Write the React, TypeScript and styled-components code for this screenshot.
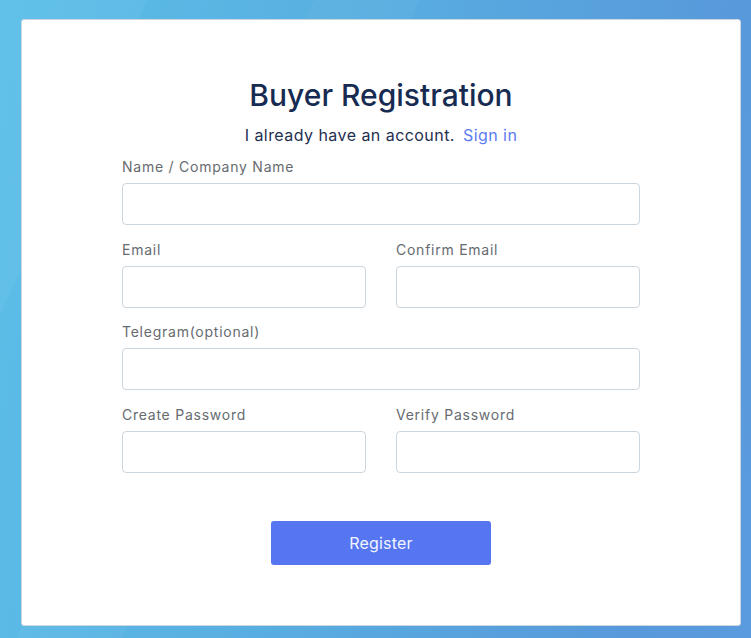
import React from "react";
import styled, { createGlobalStyle } from "styled-components";

const Global = createGlobalStyle`
  html, body { margin: 0; padding: 0; }
  body { font-family: "Inter", "Noto Sans", sans-serif; overflow: hidden; }
  * { box-sizing: border-box; }
`;

const Page = styled.div`
  position: relative;
  width: 751px;
  height: 638px;
  padding: 19px 0 0 21px;
  overflow: hidden;
  background:
    linear-gradient(115deg, rgba(255,255,255,0.04) 0 14%, transparent 14% 30%, rgba(255,255,255,0.03) 30% 40%, transparent 40%),
    linear-gradient(100deg, #5cbfe8 0%, #58ade0 45%, #5899db 85%, #5a9ade 100%);
`;

const Card = styled.div`
  width: 720px;
  height: 607px;
  background: #fff;
  border: 1px solid #cfd7de;
  border-radius: 3px;
  padding: 57px 0 0;
  display: flex;
  flex-direction: column;
  align-items: center;
`;

const Title = styled.h1`
  margin: 0;
  font-size: 30px;
  line-height: 36px;
  font-weight: 500;
  color: #172b52;
`;

const Sub = styled.p`
  margin: 10px 0 10px;
  font-size: 16px;
  line-height: 24px;
  letter-spacing: 0.45px;
  color: #1f2f4f;
`;

const Link = styled.a`
  color: #5b7cf3;
  text-decoration: none;
  margin-left: 8px;
`;

const Form = styled.form`
  width: 518px;
  display: flex;
  flex-direction: column;
  gap: 14.7px;
`;

const Row = styled.div<{ $cols: number }>`
  display: grid;
  grid-template-columns: repeat(${(p) => p.$cols}, minmax(0, 1fr));
  column-gap: 30px;
`;

const Field = styled.label`
  display: flex;
  flex-direction: column;
  min-width: 0;
`;

const Label = styled.span`
  font-size: 14px;
  line-height: 20px;
  letter-spacing: 0.75px;
  color: #666b70;
  margin-bottom: 6px;
`;

const Input = styled.input`
  width: 100%;
  min-width: 0;
  height: 42px;
  border: 1px solid #ccd6de;
  border-radius: 4px;
  padding: 0 12px;
  font: inherit;
  outline: none;
  background: #fff;
`;

const Button = styled.button`
  align-self: center;
  width: 220px;
  height: 44px;
  margin-top: 33px;
  background: #5675f0;
  color: #f2f5ff;
  border: none;
  border-radius: 3px;
  font-family: inherit;
  font-size: 16px;
  letter-spacing: 0.2px;
`;

const F = ({ label, type = "text" }: { label: string; type?: string }) => (
  <Field>
    <Label>{label}</Label>
    <Input type={type} />
  </Field>
);

export default function App() {
  return (
    <Page>
      <Global />
      <Card>
        <Title>Buyer Registration</Title>
        <Sub>
          I already have an account.<Link href="#">Sign in</Link>
        </Sub>
        <Form onSubmit={(e) => e.preventDefault()}>
          <Row $cols={1}>
            <F label="Name / Company Name" />
          </Row>
          <Row $cols={2}>
            <F label="Email" />
            <F label="Confirm Email" />
          </Row>
          <Row $cols={1}>
            <F label="Telegram(optional)" />
          </Row>
          <Row $cols={2}>
            <F label="Create Password" type="password" />
            <F label="Verify Password" type="password" />
          </Row>
          <Button type="submit">Register</Button>
        </Form>
      </Card>
    </Page>
  );
}
